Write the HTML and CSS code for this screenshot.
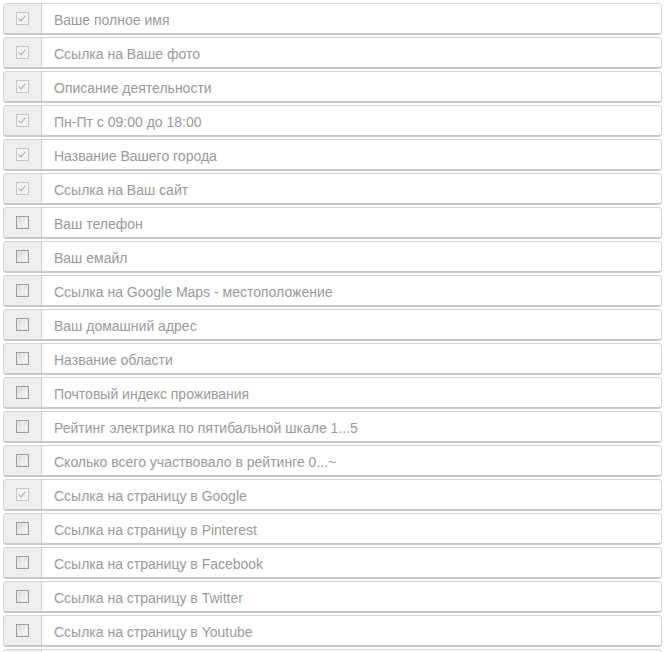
FILE: index.html
```html
<!DOCTYPE html>
<html lang="ru">
<head>
<meta charset="utf-8">
<link rel="stylesheet" href="styles.css">
</head>
<body>
<div class="list">
  <div class="row"><span class="addon"><span class="cb checked"></span></span><span class="field">Ваше полное имя</span></div>
  <div class="row"><span class="addon"><span class="cb checked"></span></span><span class="field">Ссылка на Ваше фото</span></div>
  <div class="row"><span class="addon"><span class="cb checked"></span></span><span class="field">Описание деятельности</span></div>
  <div class="row"><span class="addon"><span class="cb checked"></span></span><span class="field">Пн-Пт с 09:00 до 18:00</span></div>
  <div class="row"><span class="addon"><span class="cb checked"></span></span><span class="field">Название Вашего города</span></div>
  <div class="row"><span class="addon"><span class="cb checked"></span></span><span class="field">Ссылка на Ваш сайт</span></div>
  <div class="row"><span class="addon"><span class="cb"></span></span><span class="field">Ваш телефон</span></div>
  <div class="row"><span class="addon"><span class="cb"></span></span><span class="field">Ваш емайл</span></div>
  <div class="row"><span class="addon"><span class="cb"></span></span><span class="field">Ссылка на Google Maps - местоположение</span></div>
  <div class="row"><span class="addon"><span class="cb"></span></span><span class="field">Ваш домашний адрес</span></div>
  <div class="row"><span class="addon"><span class="cb"></span></span><span class="field">Название области</span></div>
  <div class="row"><span class="addon"><span class="cb"></span></span><span class="field">Почтовый индекс проживания</span></div>
  <div class="row"><span class="addon"><span class="cb"></span></span><span class="field">Рейтинг электрика по пятибальной шкале 1...5</span></div>
  <div class="row"><span class="addon"><span class="cb"></span></span><span class="field">Сколько всего участвовало в рейтинге 0...~</span></div>
  <div class="row"><span class="addon"><span class="cb checked"></span></span><span class="field">Ссылка на страницу в Google</span></div>
  <div class="row"><span class="addon"><span class="cb"></span></span><span class="field">Ссылка на страницу в Pinterest</span></div>
  <div class="row"><span class="addon"><span class="cb"></span></span><span class="field">Ссылка на страницу в Facebook</span></div>
  <div class="row"><span class="addon"><span class="cb"></span></span><span class="field">Ссылка на страницу в Twitter</span></div>
  <div class="row"><span class="addon"><span class="cb"></span></span><span class="field">Ссылка на страницу в Youtube</span></div>
  <div class="row"><span class="addon"><span class="cb"></span></span><span class="field"></span></div>
</div>
</body>
</html>
```

FILE: styles.css
```css
html, body {
  margin: 0;
  padding: 0;
  background: #fff;
}
body {
  padding: 3px 4px 0 3px;
  font-family: "Liberation Sans", Arial, sans-serif;
  overflow: hidden;
  height: 652px;
  box-sizing: border-box;
}
.list {
  display: flex;
  flex-direction: column;
  gap: 2px;
}
.row {
  display: flex;
  height: 32px;
  box-sizing: border-box;
  border: 1px solid #d2d2d2;
  border-bottom: 2px solid #c8c8c8;
  border-radius: 4px;
  overflow: hidden;
  flex-shrink: 0;
}
.addon {
  width: 37px;
  flex-shrink: 0;
  background: #eeeeee;
  border-right: 1px solid #cfcfcf;
  display: flex;
  align-items: center;
  justify-content: center;
}
.field {
  flex: 1;
  display: flex;
  align-items: center;
  padding: 2px 0 0 12px;
  font-size: 14px;
  color: #999999;
  background: #fff;
}
.cb {
  width: 11px;
  height: 11px;
  border: 1px solid #9c9c9c;
  background: linear-gradient(135deg, #d6d6d6 0%, #f2f2f2 70%, #fbfbfb 100%);
  box-shadow: inset 0 0 0 1px #e8e8e8;
  position: relative;
}
.cb.checked {
  border-color: #c4c4c4;
  background: #f2f2f2;
  box-shadow: none;
}
.cb.checked::after {
  content: "";
  position: absolute;
  left: 3px;
  top: 1px;
  width: 3px;
  height: 6px;
  border: solid #a8a8a8;
  border-width: 0 1px 1px 0;
  transform: rotate(40deg);
}
```
